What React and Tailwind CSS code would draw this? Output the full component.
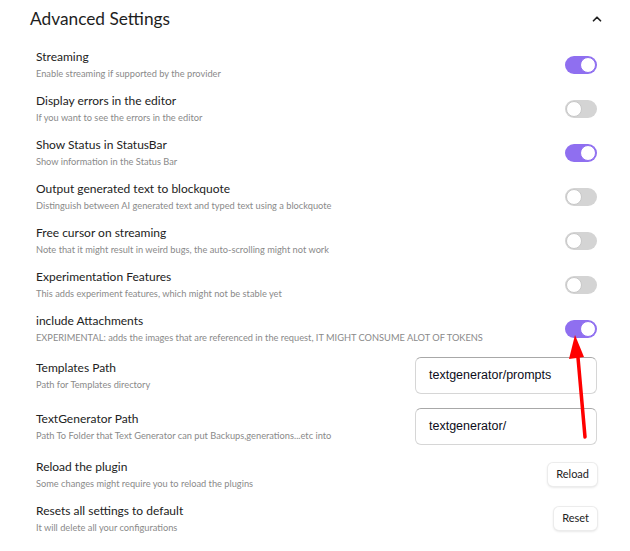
import { ChevronUp } from 'lucide-react'

const toggles = [
  { title: 'Streaming', desc: 'Enable streaming if supported by the provider', on: true },
  { title: 'Display errors in the editor', desc: 'If you want to see the errors in the editor', on: false },
  { title: 'Show Status in StatusBar', desc: 'Show information in the Status Bar', on: true },
  { title: 'Output generated text to blockquote', desc: 'Distinguish between AI generated text and typed text using a blockquote', on: false },
  { title: 'Free cursor on streaming', desc: 'Note that it might result in weird bugs, the auto-scrolling might not work', on: false },
  { title: 'Experimentation Features', desc: 'This adds experiment features, which might not be stable yet', on: false },
  {
    title: 'include Attachments',
    desc: 'EXPERIMENTAL: adds the images that are referenced in the request, IT MIGHT CONSUME ALOT OF TOKENS',
    on: true,
  },
]

function Toggle({ on }) {
  return (
    <div
      className={
        on
          ? 'flex h-[18px] w-[32px] shrink-0 items-center justify-end rounded-full bg-[#8f6ff0] px-[1px]'
          : 'flex h-[18px] w-[32px] shrink-0 items-center justify-start rounded-full bg-[#d4d4d4] px-[1px]'
      }
    >
      <div
        className={
          on
            ? 'h-[16px] w-[16px] rounded-full border border-[#8f6ff0] bg-white'
            : 'h-[16px] w-[16px] rounded-full border border-[#c8c8c8] bg-white'
        }
      />
    </div>
  )
}

function Info({ title, desc }) {
  return (
    <div className="flex min-w-0 flex-col">
      <div className="text-[12px] leading-[18px] text-[#222]">{title}</div>
      <div className="whitespace-nowrap text-[9.25px] leading-[16px] text-[#8a8a8a]">{desc}</div>
    </div>
  )
}

function PathInput({ value }) {
  return (
    <div className="flex h-[37px] w-[182px] shrink-0 items-center rounded-[6px] border border-[#d6d6d6] border-t-[#a8a8a8] bg-white pl-[13px] font-['Liberation_Sans',Arial,sans-serif] text-[12.5px] text-[#0d0d1a]">
      {value}
    </div>
  )
}

function Button({ label }) {
  return (
    <button className="h-[23px] shrink-0 rounded-[5px] bg-white px-[8px] text-[11px] text-[#222] shadow-[0_1px_3px_rgba(0,0,0,0.18)] ring-1 ring-[#ececec]">
      {label}
    </button>
  )
}

export default function App() {
  return (
    <div className="relative h-[551px] w-[630px] overflow-hidden bg-white font-['Lato','Open_Sans',sans-serif]">
      {/* header */}
      <div className="flex h-[38px] items-center justify-between pl-[30px] pr-[26px]">
        <h2 className="text-[17.3px] font-normal text-[#1e1e1e]">Advanced Settings</h2>
        <ChevronUp size={14} strokeWidth={3} className="text-[#222]" />
      </div>

      <div className="flex flex-col pl-[36px] pr-[33px] pt-[5px]">
        {toggles.map((t) => (
          <div key={t.title} className="flex h-[44px] items-center justify-between">
            <Info title={t.title} desc={t.desc} />
            <Toggle on={t.on} />
          </div>
        ))}

        <div className="flex h-[49px] items-center justify-between">
          <Info title="Templates Path" desc="Path for Templates directory" />
          <PathInput value="textgenerator/prompts" />
        </div>
        <div className="flex h-[53px] items-center justify-between">
          <Info title="TextGenerator Path" desc="Path To Folder that Text Generator can put Backups,generations...etc into" />
          <PathInput value="textgenerator/" />
        </div>
        <div className="flex h-[43px] items-center justify-between">
          <Info title="Reload the plugin" desc="Some changes might require you to reload the plugins" />
          <Button label="Reload" />
        </div>
        <div className="flex h-[45px] items-center justify-between">
          <Info title="Resets all settings to default" desc="It will delete all your configurations" />
          <Button label="Reset" />
        </div>
      </div>

      {/* annotation arrow */}
      <svg className="pointer-events-none absolute left-0 top-0" width="630" height="551">
        <line x1="585" y1="437" x2="577.5" y2="352" stroke="#ff0000" strokeWidth="3.5" strokeLinecap="round" />
        <polygon points="575,335 569,359 584,357" fill="#ff0000" />
      </svg>
    </div>
  )
}
